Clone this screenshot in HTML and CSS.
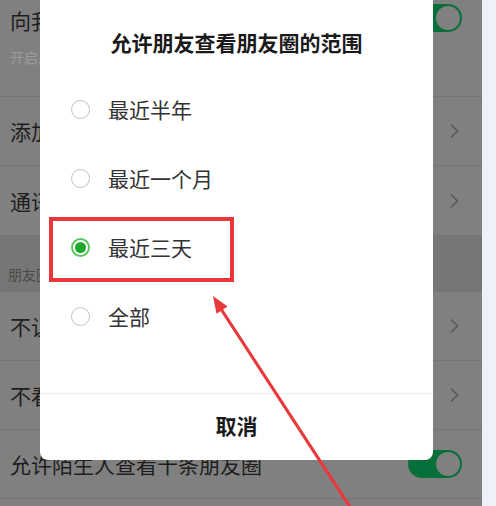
FILE: index.html
```html
<!DOCTYPE html>
<html lang="zh-CN">
<head>
<meta charset="utf-8">
<title>允许朋友查看朋友圈的范围</title>
<link rel="stylesheet" href="styles.css">
</head>
<body>
<div class="page">
  <div class="screen">
    <div class="row row-top">
      <div class="row-text">
        <div class="row-title">向我推荐通讯录朋友</div>
        <div class="row-sub">开启后，为你推荐已经开通微信的手机联系人</div>
      </div>
      <div class="toggle toggle-top"><span class="knob"></span></div>
    </div>
    <div class="row">
      <div class="row-title">添加我的方式</div>
      <svg class="chev" width="10" height="16" viewBox="0 0 10 16"><polyline points="2,1.5 8.5,8 2,14.5" fill="none" stroke="#5a5a5a" stroke-width="1.6"/></svg>
    </div>
    <div class="row row-last">
      <div class="row-title">通讯录黑名单</div>
      <svg class="chev" width="10" height="16" viewBox="0 0 10 16"><polyline points="2,1.5 8.5,8 2,14.5" fill="none" stroke="#5a5a5a" stroke-width="1.6"/></svg>
    </div>
    <div class="section">朋友圈</div>
    <div class="row">
      <div class="row-title">不让他（她）看</div>
      <svg class="chev" width="10" height="16" viewBox="0 0 10 16"><polyline points="2,1.5 8.5,8 2,14.5" fill="none" stroke="#5a5a5a" stroke-width="1.6"/></svg>
    </div>
    <div class="row">
      <div class="row-title">不看他（她）</div>
      <svg class="chev" width="10" height="16" viewBox="0 0 10 16"><polyline points="2,1.5 8.5,8 2,14.5" fill="none" stroke="#5a5a5a" stroke-width="1.6"/></svg>
    </div>
    <div class="row">
      <div class="row-title">允许陌生人查看十条朋友圈</div>
      <div class="toggle"><span class="knob"></span></div>
    </div>
  </div>

  <div class="dialog">
    <div class="dlg-title">允许朋友查看朋友圈的范围</div>
    <ul class="options">
      <li class="option"><span class="radio"></span><span class="opt-text">最近半年</span></li>
      <li class="option"><span class="radio"></span><span class="opt-text">最近一个月</span></li>
      <li class="option"><span class="radio radio-on"></span><span class="opt-text">最近三天</span></li>
      <li class="option"><span class="radio"></span><span class="opt-text">全部</span></li>
    </ul>
    <div class="dlg-footer">取消</div>
  </div>

  <div class="mark-box"></div>
  <svg class="arrow" width="496" height="506" viewBox="0 0 496 506">
    <line x1="352" y1="510" x2="221" y2="309" stroke="#e8393d" stroke-width="3.2" stroke-linecap="round"/>
    <polygon points="213,296 227.5,306.5 216.5,313.8" fill="#e8393d"/>
  </svg>
</div>
</body>
</html>
```

FILE: styles.css
```css
* { box-sizing: border-box; }
html, body { margin: 0; padding: 0; }
body {
  width: 496px;
  height: 506px;
  overflow: hidden;
  background: #eef1fa;
  font-family: "Noto Sans CJK SC", "Noto Sans", sans-serif;
}
.page {
  position: relative;
  width: 496px;
  height: 506px;
  overflow: hidden;
}
.screen {
  width: 482px;
  height: 506px;
  background: #808080;
  display: flex;
  flex-direction: column;
}
.row {
  height: 69px;
  flex: none;
  display: flex;
  align-items: center;
  justify-content: space-between;
  padding: 0 20px 0 10px;
  border-bottom: 1px solid #767676;
}
.row-last { border-bottom: none; }
.row .chev { margin-right: 3px; }
.row-top {
  height: 97px;
  align-items: flex-start;
  padding-top: 6px;
}
.row-title {
  font-size: 21px;
  line-height: 28px;
  color: #1e1e1e;
  white-space: nowrap;
}
.row-sub {
  margin-top: 13px;
  font-size: 14px;
  line-height: 20px;
  color: #9c9c9c;
  white-space: nowrap;
}
.section {
  height: 57px;
  flex: none;
  background: #767676;
  font-size: 14px;
  line-height: 20px;
  color: #4a4a4a;
  padding: 29px 0 0 8px;
}
.toggle {
  flex: none;
  width: 54px;
  height: 28px;
  border-radius: 14px;
  background: #07703a;
  display: flex;
  align-items: center;
  justify-content: flex-end;
  padding-right: 2px;
}
.toggle-top { margin-top: -2px; }
.knob {
  width: 24px;
  height: 24px;
  border-radius: 50%;
  background: #808080;
}

.dialog {
  position: absolute;
  left: 40px;
  top: -10px;
  width: 393px;
  height: 470px;
  background: #ffffff;
  border-radius: 8px;
  display: flex;
  flex-direction: column;
}
.dlg-title {
  padding-top: 37px;
  font-size: 21px;
  line-height: 30px;
  font-weight: 700;
  color: #1a1a1a;
  text-align: center;
}
.options {
  list-style: none;
  margin: 0;
  padding: 18px 0 0 0;
}
.option {
  height: 69px;
  display: flex;
  align-items: center;
  padding-left: 31px;
}
.opt-text { position: relative; top: -1px; }
.radio {
  flex: none;
  width: 19px;
  height: 19px;
  border-radius: 50%;
  border: 1.5px solid #c2c2c2;
  margin-right: 18px;
}
.radio-on {
  border: 2px solid #5cc461;
  display: flex;
  align-items: center;
  justify-content: center;
}
.radio-on::after {
  content: "";
  width: 11px;
  height: 11px;
  border-radius: 50%;
  background: #1fa82c;
}
.opt-text {
  font-size: 21px;
  line-height: 30px;
  color: #333333;
}
.dlg-footer {
  margin-top: auto;
  height: 67px;
  padding-bottom: 4px;
  border-top: 1px solid #ededed;
  display: flex;
  align-items: center;
  justify-content: center;
  font-size: 21px;
  font-weight: 700;
  color: #1a1a1a;
}

.mark-box {
  position: absolute;
  left: 49px;
  top: 217px;
  width: 185px;
  height: 65px;
  border: 4px solid #e8363b;
}
.arrow {
  position: absolute;
  left: 0;
  top: 0;
  pointer-events: none;
}
```
